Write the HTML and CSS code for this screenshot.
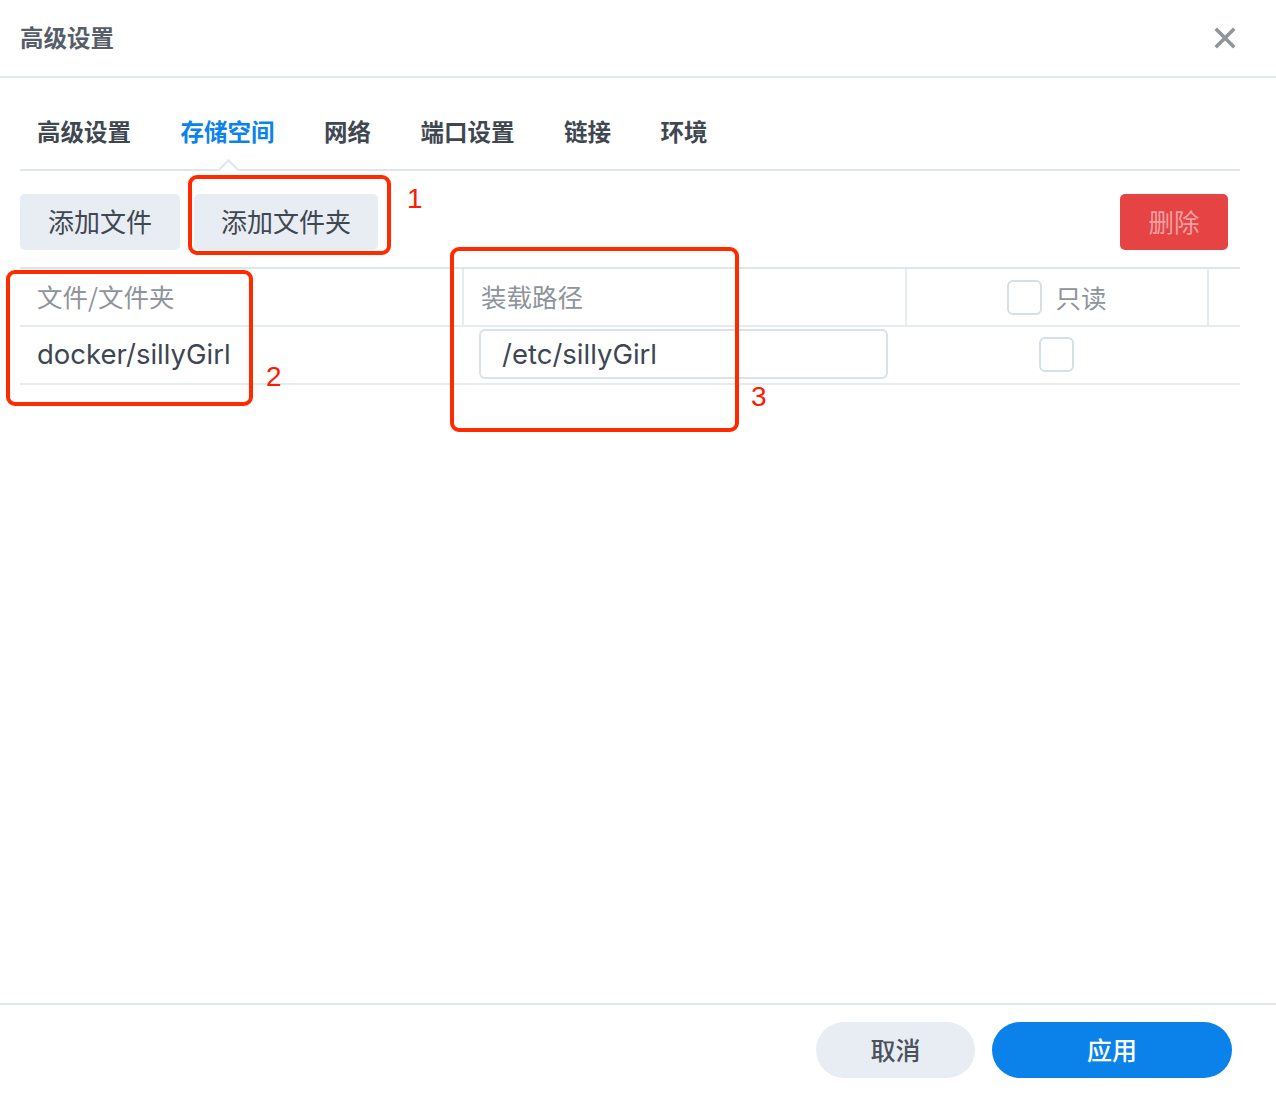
FILE: index.html
```html
<!DOCTYPE html>
<html lang="zh-CN">
<head>
<meta charset="utf-8">
<title>高级设置</title>
<link rel="stylesheet" href="styles.css">
</head>
<body>
<div class="dialog">
  <header class="dlg-header">
    <h1 class="dlg-title">高级设置</h1>
    <button class="close-btn" aria-label="关闭">
      <svg width="22" height="22" viewBox="0 0 22 22"><path d="M3 3 L19 19 M19 3 L3 19" stroke="#8f959c" stroke-width="3.6" stroke-linecap="square" fill="none"/></svg>
    </button>
  </header>

  <main class="dlg-body">
    <nav class="tabs">
      <span class="tab">高级设置</span>
      <span class="tab active">存储空间</span>
      <span class="tab">网络</span>
      <span class="tab">端口设置</span>
      <span class="tab">链接</span>
      <span class="tab">环境</span>
    </nav>

    <div class="toolbar">
      <div class="toolbar-left">
        <button class="btn btn-gray btn-file">添加文件</button>
        <button class="btn btn-gray btn-folder">添加文件夹</button>
      </div>
      <button class="btn btn-danger">删除</button>
    </div>

    <div class="table">
      <div class="row head">
        <div class="cell c1">文件/文件夹</div>
        <div class="cell c2 sep">装载路径</div>
        <div class="cell c3 sep center"><span class="checkbox"></span><span class="ro-label">只读</span></div>
        <div class="cell c4 sep"></div>
      </div>
      <div class="row data">
        <div class="cell c1 val">docker/sillyGirl</div>
        <div class="cell c2"><div class="input">/etc/sillyGirl</div></div>
        <div class="cell c3 center"><span class="checkbox"></span></div>
        <div class="cell c4"></div>
      </div>
    </div>
  </main>

  <footer class="dlg-footer">
    <button class="pill pill-gray">取消</button>
    <button class="pill pill-blue">应用</button>
  </footer>

  <div class="anno anno-1"></div>
  <div class="anno anno-2"></div>
  <div class="anno anno-3"></div>
  <span class="anno-num num-1">1</span>
  <span class="anno-num num-2">2</span>
  <span class="anno-num num-3">3</span>
</div>
</body>
</html>
```

FILE: styles.css
```css
* { box-sizing: border-box; }

html, body {
  margin: 0;
  padding: 0;
  background: #ffffff;
}

body {
  font-family: "Noto Sans", "Noto Sans CJK SC", sans-serif;
  color: #3d4652;
}

.dialog {
  position: relative;
  height: 1096px;
  display: flex;
  flex-direction: column;
}

/* header */
.dlg-header {
  height: 78px;
  border-bottom: 2px solid #e3e8ee;
  display: flex;
  align-items: center;
  justify-content: space-between;
  padding: 0 40px 0 20px;
}

.dlg-title {
  margin: 0;
  font-family: "Noto Sans CJK SC", sans-serif;
  font-size: 23.5px;
  font-weight: 700;
  color: #555e69;
  padding-bottom: 2px;
}

.close-btn {
  border: 0;
  background: none;
  padding: 0;
  width: 22px;
  height: 22px;
  display: flex;
}

/* body */
.dlg-body {
  flex: 1;
  padding: 0 36px 0 20px;
}

.tabs {
  display: flex;
  gap: 49.5px;
  padding-left: 17px;
  border-bottom: 2px solid #dfe5ec;
}

.tab {
  position: relative;
  font-family: "Noto Sans CJK SC", sans-serif;
  font-size: 23.5px;
  font-weight: 700;
  line-height: 30px;
  padding: 38px 0 23px;
  color: #3f4751;
}

.tab.active {
  color: #0b83ea;
}

.tab.active::after {
  content: "";
  position: absolute;
  left: 50%;
  bottom: -8px;
  width: 13px;
  height: 13px;
  margin-left: -6.5px;
  background: #fff;
  border-left: 2px solid #dfe5ec;
  border-top: 2px solid #dfe5ec;
  transform: rotate(45deg);
}

.toolbar {
  display: flex;
  justify-content: space-between;
  align-items: center;
  margin-top: 23px;
  padding-right: 12px;
}

.toolbar-left {
  display: flex;
  gap: 14px;
}

.btn {
  height: 56px;
  border: 0;
  border-radius: 5px;
  font-family: "Noto Sans CJK SC", sans-serif;
  font-size: 26px;
  font-weight: 400;
  padding: 0 0 3px;
}

.btn-gray {
  background: #e8edf3;
  color: #3f4751;
}

.btn-file { width: 160px; }
.btn-folder { width: 184px; }

.btn-danger {
  width: 108px;
  background: #e64444;
  color: #f2a0a0;
  font-size: 25.5px;
}

/* table */
.table {
  margin-top: 17px;
  border-top: 2px solid #dfe5ec;
}

.row {
  display: grid;
  grid-template-columns: 442px 443px 302px 1fr;
  border-bottom: 2px solid #e6ebf0;
}

.row.head { height: 58px; }
.row.data { height: 58px; }

.cell {
  display: flex;
  align-items: center;
  font-family: "Noto Sans CJK SC", sans-serif;
}

.head .cell {
  font-size: 25.5px;
  color: #8e949b;
}

.head .c1, .head .c2 { padding: 0 0 4px 17px; }
.head .c3 { padding-bottom: 2px; }

.sep { border-left: 2px solid #e6ebf0; }

.center { justify-content: center; }

.checkbox {
  display: inline-block;
  width: 35px;
  height: 35px;
  border: 2px solid #d6dfe8;
  border-radius: 6px;
  background: #fff;
}

.head .checkbox { margin-top: 2px; }

.ro-label { margin-left: 13px; }

.val {
  padding: 0 0 2px 17px;
  font-family: "Inter", "Noto Sans", sans-serif;
  font-size: 27.5px;
  color: #3d4652;
}

.data .c2 { padding: 0 17px 2px; }
.data .c3 { padding-bottom: 2px; }

.input {
  width: 100%;
  height: 50px;
  border: 2px solid #d9e1ea;
  border-radius: 6px;
  display: flex;
  align-items: center;
  padding-left: 21px;
  font-family: "Inter", "Noto Sans", sans-serif;
  font-size: 27.5px;
  color: #3d4652;
}

/* footer */
.dlg-footer {
  height: 93px;
  border-top: 2px solid #e3e8ee;
  display: flex;
  justify-content: flex-end;
  align-items: flex-start;
  gap: 17px;
  padding: 17px 44px 0 0;
}

.pill {
  height: 56px;
  border: 0;
  border-radius: 28px;
  font-family: "Noto Sans CJK SC", sans-serif;
  font-size: 25px;
  font-weight: 500;
  padding: 0 0 3px;
}

.pill-gray {
  width: 159px;
  background: #e8edf3;
  color: #4a525d;
}

.pill-blue {
  width: 240px;
  background: #0a82ea;
  color: #ffffff;
}

/* annotations (overlay) */
.anno {
  position: absolute;
  border: 4px solid #ff2a00;
  border-radius: 9px;
}

.anno-1 { left: 188px; top: 175px; width: 203px; height: 80px; }
.anno-2 { left: 6px; top: 270px; width: 247px; height: 136px; }
.anno-3 { left: 450px; top: 247px; width: 289px; height: 185px; }

.anno-num {
  position: absolute;
  font-family: "Liberation Sans", sans-serif;
  font-size: 28px;
  line-height: 28px;
  color: #ff1a00;
}

.num-1 { left: 407px; top: 185px; }
.num-2 { left: 266px; top: 363px; }
.num-3 { left: 751px; top: 383px; }
```
